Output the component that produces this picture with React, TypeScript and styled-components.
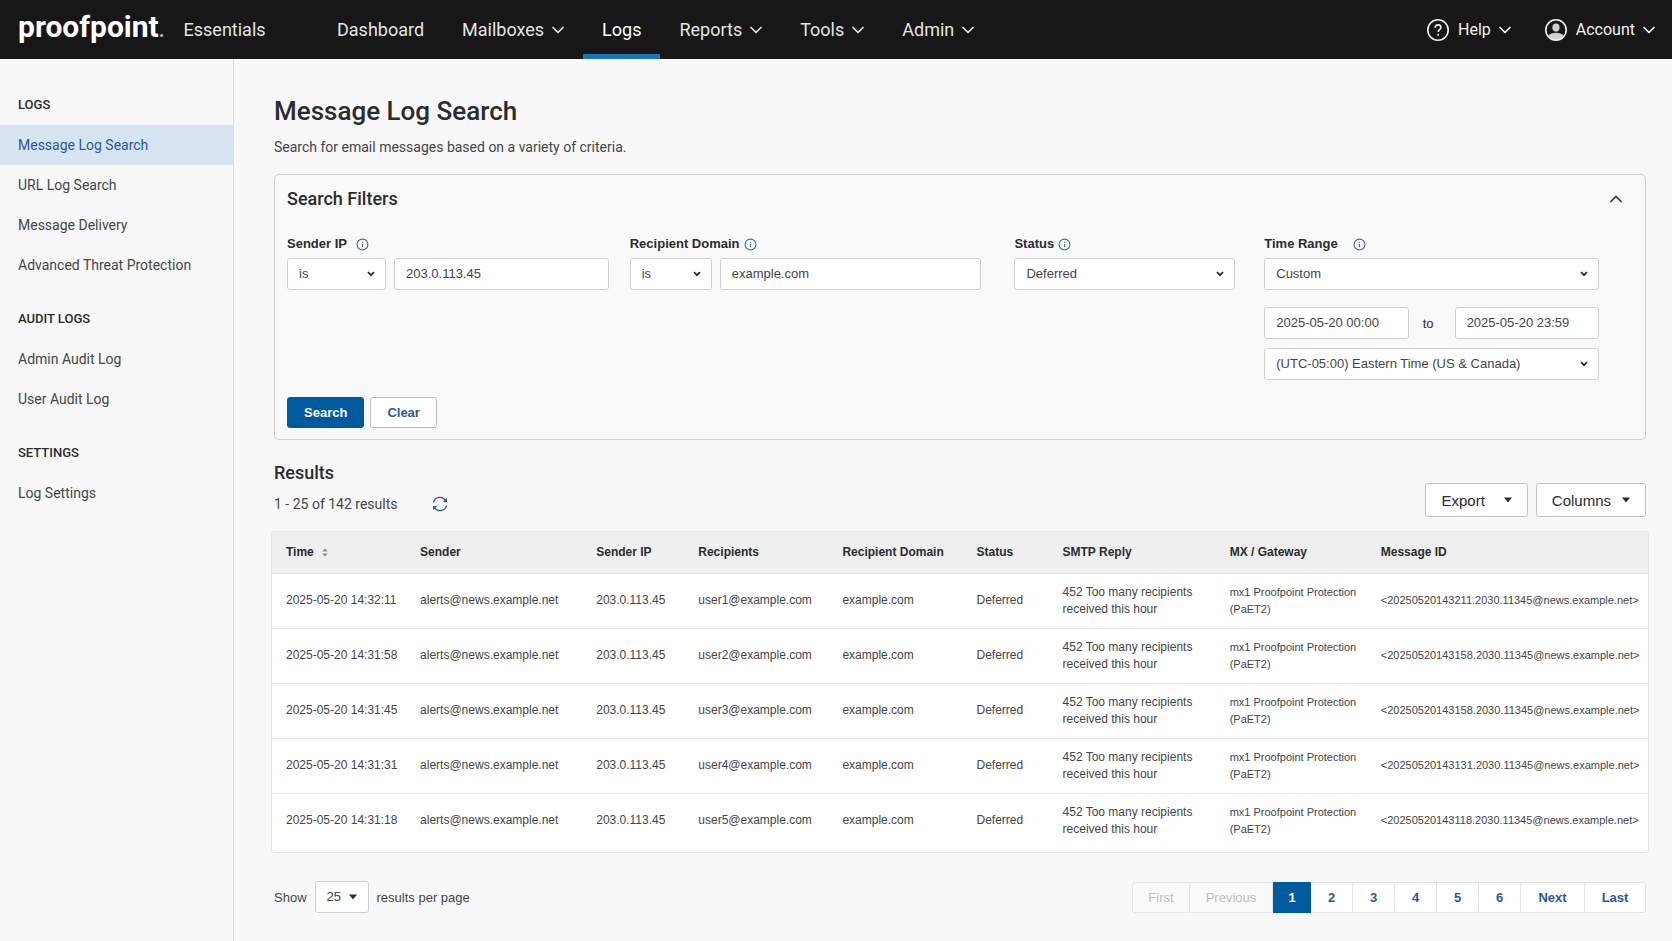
import React from "react";
import styled, { createGlobalStyle } from "styled-components";
import { Info } from "lucide-react";

const display = `Roboto, "Liberation Sans", sans-serif`;
const body = `"Liberation Sans", Arial, sans-serif`;

const color = {
  ink: "#2a2c2e",
  text: "#434648",
  link: "#28599a",
  brand: "#005a9e",
  line: "#cfd0d1",
  softLine: "#e4e5e6",
};

const GlobalStyle = createGlobalStyle`
  *, *::before, *::after { box-sizing: border-box; }
  body { margin: 0; background: #f8f8f8; color: ${color.text}; font-family: ${body}; }
  button, input, select { font-family: inherit; margin: 0; }
  h1, h2, h3, p, ul { margin: 0; padding: 0; }
  ul { list-style: none; }
  a { text-decoration: none; color: inherit; }
`;

const Page = styled.div`
  min-height: 100vh;
  display: flex;
  flex-direction: column;
`;

const TopBar = styled.header`
  height: 59px;
  flex: none;
  display: flex;
  align-items: stretch;
  padding: 0 17px 0 18px;
  background: #171717;
  color: #e4e4e4;
  font-family: ${display};
`;

const Brand = styled.a`
  display: flex;
  align-items: center;
  width: 300px;
  gap: 19px;
  font-size: 18px;
`;

const Wordmark = styled.span`
  color: #fff;
  font-size: 30px;
  font-weight: 700;
  line-height: 54px;
  padding-bottom: 2px;
`;

const Registered = styled.span`
  color: #b5b5b5;
  font-size: 20px;
`;

const MainNav = styled.nav`
  display: flex;
  flex: 1;
`;

const NavLink = styled.a<{ $active?: boolean }>`
  display: flex;
  align-items: center;
  gap: 8px;
  padding: 5px 19px 0;
  font-size: 18px;
  color: ${(p) => (p.$active ? "#fff" : "#e4e4e4")};
  border-bottom: 5px solid ${(p) => (p.$active ? "#1677bd" : "transparent")};
`;

const UserNav = styled.nav`
  display: flex;
  align-items: center;
  gap: 33px;
`;

const UserLink = styled.a`
  display: flex;
  align-items: center;
  gap: 8px;
  font-size: 16px;
  color: #f2f2f2;
`;

const Columns = styled.div`
  flex: 1;
  display: flex;
`;

const Sidebar = styled.aside`
  width: 234px;
  flex: none;
  padding-top: 26px;
  border-right: 1px solid #dcdddd;
  display: flex;
  flex-direction: column;
  gap: 14px;
  font-family: ${display};
`;

const SideHeading = styled.h3`
  padding-left: 18px;
  font-size: 13px;
  font-weight: 500;
  line-height: 40px;
  color: ${color.ink};
`;

const SideLink = styled.a<{ $active?: boolean }>`
  display: block;
  padding-left: 18px;
  font-size: 14px;
  line-height: 40px;
  color: ${(p) => (p.$active ? color.link : color.text)};
  background: ${(p) => (p.$active ? "#d7e5f3" : "transparent")};
`;

const Main = styled.main`
  flex: 1;
  min-width: 0;
  padding: 35px 26px 0 40px;
`;

const Title = styled.h1`
  font: 500 26px/34px ${display};
  color: ${color.ink};
`;

const Subtitle = styled.p`
  padding-top: 7px;
  font: 400 14px/24px ${display};
`;

const FilterCard = styled.section`
  margin-top: 15px;
  padding: 12px 46px 11px 12px;
  border: 1px solid ${color.line};
  border-radius: 5px;
  background: #f9f9f9;
`;

const CardHead = styled.div`
  display: flex;
  align-items: center;
  justify-content: space-between;
  margin-right: -27px;
`;

const Heading = styled.h2`
  font: 500 18px/24px ${display};
  color: ${color.ink};
`;

const IconButton = styled.button`
  display: flex;
  padding: 0 4px;
  border: 0;
  background: none;
  color: ${(p) => p.color ?? color.text};
`;

const Filters = styled.div`
  display: grid;
  grid-template-columns: 343fr 385fr 250fr 335fr;
  padding-top: 23px;
`;

const Field = styled.div<{ $after?: number }>`
  padding-right: ${(p) => p.$after ?? 0}px;
  min-width: 0;
`;

const FieldLabel = styled.label<{ $gap?: number }>`
  display: flex;
  align-items: center;
  gap: ${(p) => p.$gap ?? 4}px;
  padding-bottom: 4px;
  font-size: 13px;
  font-weight: 700;
  line-height: 20px;
  color: ${color.ink};

  svg { color: #3a69a6; }
`;

const Controls = styled.div<{ $top?: number }>`
  display: flex;
  align-items: center;
  gap: 8px;
  padding-top: ${(p) => p.$top ?? 0}px;
`;

const TextInput = styled.input`
  flex: 1;
  min-width: 0;
  height: 32px;
  padding: 0 11px 2px;
  border: 1px solid ${color.line};
  border-radius: 3px;
  background: #fff;
  color: ${color.text};
  font-size: 13px;
`;

const To = styled.span`
  width: 30px;
  padding-left: 6px;
  font-size: 13px;
  color: ${color.ink};
`;

const SelectBox = styled.span<{ $width?: number }>`
  display: grid;
  align-items: center;
  ${(p) => (p.$width ? `width: ${p.$width}px; flex: none;` : "flex: 1; min-width: 0;")}

  > * { grid-area: 1 / 1; }
  > svg { justify-self: end; margin-right: 11px; pointer-events: none; color: ${color.ink}; }
`;

const Select = styled.select`
  appearance: none;
  width: 100%;
  height: 32px;
  padding: 0 11px 2px;
  border: 1px solid ${color.line};
  border-radius: 3px;
  background: #fff;
  color: ${color.text};
  font-size: 13px;
`;

const Actions = styled.div`
  display: flex;
  gap: 6px;
  padding-top: 17px;
`;

const Button = styled.button<{ $primary?: boolean }>`
  height: 31px;
  padding: 0 16px;
  border: 1px solid ${(p) => (p.$primary ? color.brand : "#b9bbbd")};
  border-radius: 3px;
  background: ${(p) => (p.$primary ? color.brand : "#fff")};
  color: ${(p) => (p.$primary ? "#fff" : color.link)};
  font-size: 13px;
  font-weight: 700;
`;

const ResultsHead = styled.div`
  display: flex;
  justify-content: space-between;
  align-items: flex-end;
  padding: 21px 0 14px;
`;

const ResultCount = styled.div`
  display: flex;
  align-items: center;
  gap: 31px;
  padding-top: 6px;
  font: 400 14px/26px ${display};
`;

const Tools = styled.div`
  display: flex;
  gap: 8px;
`;

const ToolButton = styled.button<{ $gap: number }>`
  display: flex;
  align-items: center;
  gap: ${(p) => p.$gap}px;
  height: 34px;
  padding: 0 14px 0 15px;
  border: 1px solid #c0c2c4;
  border-radius: 3px;
  background: #fff;
  color: ${color.ink};
  font-size: 15px;
`;

const TableFrame = styled.div`
  margin: 0 -3px;
  padding-bottom: 4px;
  border: 1px solid ${color.softLine};
  border-radius: 3px;
  background: #fff;
`;

const Table = styled.table`
  width: 100%;
  table-layout: fixed;
  border-collapse: collapse;
`;

const HeadCell = styled.th<{ $width: number }>`
  width: ${(p) => p.$width}px;
  height: 41px;
  padding: 0;
  text-align: left;
  white-space: nowrap;
  font-size: 12px;
  font-weight: 700;
  color: ${color.ink};
  background: #efefef;
  border-bottom: 1px solid ${color.softLine};

  &:first-child { padding-left: 14px; }
  svg { margin-left: 8px; vertical-align: -1px; }
`;

const Row = styled.tr`
  &:not(:last-child) td { border-bottom: 1px solid ${color.softLine}; }
`;

const Cell = styled.td<{ $small?: boolean }>`
  height: 55px;
  padding: 0;
  font-size: ${(p) => (p.$small ? 11 : 12)}px;
  line-height: 17px;
  white-space: pre-line;

  &:first-child { padding-left: 14px; }
`;

const Footer = styled.footer`
  display: flex;
  justify-content: space-between;
  align-items: center;
  padding: 28px 0 27px;
`;

const PageSize = styled.label`
  display: flex;
  align-items: center;
  gap: 8px;
  font-size: 13px;
`;

const Pager = styled.nav`
  display: flex;
`;

const PageButton = styled.button<{ $width: number; $current?: boolean }>`
  width: ${(p) => p.$width}px;
  height: 31px;
  padding: 0;
  border: 1px solid ${(p) => (p.$current ? color.brand : color.softLine)};
  border-left-width: ${(p) => (p.$current ? 1 : 0)}px;
  background: ${(p) => (p.$current ? color.brand : "#fff")};
  color: ${(p) => (p.$current ? "#fff" : color.link)};
  font-size: 13px;
  font-weight: 700;

  &:first-child { border-left-width: 1px; border-radius: 3px 0 0 3px; }
  &:last-child { border-radius: 0 3px 3px 0; }
  &:disabled { background: #fafafa; color: #bcbec0; font-weight: 400; }
`;

const Chevron = ({ up }: { up?: boolean }) => (
  <svg width="12" height="8" viewBox="0 0 12 8" fill="none" aria-hidden="true">
    <path
      d={up ? "M0.8 6.600L6 1.400l5.200 5.200" : "M1 1.500l5 5 5-5"}
      stroke="currentColor"
      strokeWidth="1.7"
      strokeLinecap="round"
      strokeLinejoin="round"
    />
  </svg>
);

const Caret = () => (
  <svg width="10" height="6" viewBox="0 0 10 6" aria-hidden="true">
    <path d="M1 0.5h8L5 5.500z" fill="currentColor" />
  </svg>
);

const SelectArrow = () => (
  <svg width="8" height="6" viewBox="0 0 8 6" fill="none" aria-hidden="true">
    <path d="M1 1.200l3 3 3-3" stroke="currentColor" strokeWidth="1.8" />
  </svg>
);

const SortIcon = () => (
  <svg width="6" height="9" viewBox="0 0 6 9" aria-hidden="true">
    <path d="M0.200 3.500L3 0.400l2.800 3.100zM0.200 5.500L3 8.600l2.800-3.100z" fill="#8b8d8f" />
  </svg>
);

const RefreshIcon = () => (
  <svg width="16" height="16" viewBox="0 0 16 16" fill="none" aria-hidden="true">
    <g stroke="currentColor" strokeWidth="1.3">
      <path d="M1.500 6.400A6.600 6.600 0 0 1 13.500 4.400" />
      <path d="M14.500 9.600A6.600 6.600 0 0 1 2.500 11.600" />
    </g>
    <path d="M14.900 1.800v4.200h-4.200zM1.100 14.200V10h4.200z" fill="currentColor" />
  </svg>
);

const HelpIcon = () => (
  <svg width="24" height="24" viewBox="0 0 24 24" fill="none" stroke="currentColor" aria-hidden="true">
    <circle cx="12" cy="12" r="10.2" strokeWidth="1.6" />
    <path d="M9.200 9.700c0-1.700 1.200-2.800 2.900-2.800s2.800 1 2.800 2.600c0 2-2.800 2.200-2.800 4.500" strokeWidth="1.6" />
    <circle cx="12.1" cy="16.7" r="1" fill="currentColor" stroke="none" />
  </svg>
);

const AccountIcon = () => (
  <svg width="24" height="24" viewBox="0 0 24 24" fill="none" aria-hidden="true">
    <ellipse cx="12" cy="9.6" rx="3.6" ry="4.1" fill="#cfd0d4" />
    <path d="M4 18.200c1.800-2.400 4.800-3.400 8-3.400s6.200 1 8 3.400a10 10 0 0 1-16 0z" fill="#cfd0d4" />
    <circle cx="12" cy="12" r="10.2" stroke="currentColor" strokeWidth="1.6" />
  </svg>
);

const navItems = [
  { label: "Dashboard" },
  { label: "Mailboxes", menu: true },
  { label: "Logs", active: true },
  { label: "Reports", menu: true },
  { label: "Tools", menu: true },
  { label: "Admin", menu: true },
];

const sideGroups = [
  { title: "LOGS", links: ["Message Log Search", "URL Log Search", "Message Delivery", "Advanced Threat Protection"] },
  { title: "AUDIT LOGS", links: ["Admin Audit Log", "User Audit Log"] },
  { title: "SETTINGS", links: ["Log Settings"] },
];

const tableColumns: [string, number][] = [
  ["Time", 148],
  ["Sender", 176],
  ["Sender IP", 102],
  ["Recipients", 144],
  ["Recipient Domain", 134],
  ["Status", 86],
  ["SMTP Reply", 167],
  ["MX / Gateway", 151],
  ["Message ID", 267],
];

const messages = [
  ["14:32:11", "20250520143211"],
  ["14:31:58", "20250520143158"],
  ["14:31:45", "20250520143158"],
  ["14:31:31", "20250520143131"],
  ["14:31:18", "20250520143118"],
].map(([time, id], i) => [
  `2025-05-20 ${time}`,
  "alerts@news.example.net",
  "203.0.113.45",
  `user${i + 1}@example.com`,
  "example.com",
  "Deferred",
  "452 Too many recipients\nreceived this hour",
  "mx1 Proofpoint Protection\n(PaET2)",
  `<${id}.2030.11345@news.example.net>`,
]);

const pages: { label: string; width: number; disabled?: boolean; current?: boolean }[] = [
  { label: "First", width: 58, disabled: true },
  { label: "Previous", width: 83, disabled: true },
  { label: "1", width: 38, current: true },
  { label: "2", width: 42 },
  { label: "3", width: 42 },
  { label: "4", width: 42 },
  { label: "5", width: 42 },
  { label: "6", width: 42 },
  { label: "Next", width: 64 },
  { label: "Last", width: 61 },
];

interface DropdownProps {
  id?: string;
  label?: string;
  value: string;
  width?: number;
  arrow?: React.ReactNode;
}

const Dropdown = ({ id, label, value, width, arrow = <SelectArrow /> }: DropdownProps) => (
  <SelectBox $width={width}>
    <Select id={id} aria-label={label}>
      <option>{value}</option>
    </Select>
    {arrow}
  </SelectBox>
);

export default function App() {
  return (
    <Page>
      <GlobalStyle />
      <TopBar>
        <Brand href="#">
          <Wordmark>
            proofpoint<Registered>.</Registered>
          </Wordmark>
          Essentials
        </Brand>
        <MainNav>
          {navItems.map((item) => (
            <NavLink key={item.label} href="#" $active={item.active}>
              {item.label}
              {item.menu && <Chevron />}
            </NavLink>
          ))}
        </MainNav>
        <UserNav>
          <UserLink href="#">
            <HelpIcon />
            Help
            <Chevron />
          </UserLink>
          <UserLink href="#">
            <AccountIcon />
            Account
            <Chevron />
          </UserLink>
        </UserNav>
      </TopBar>
      <Columns>
        <Sidebar>
          {sideGroups.map((group) => (
            <div key={group.title}>
              <SideHeading>{group.title}</SideHeading>
              <ul>
                {group.links.map((link) => (
                  <li key={link}>
                    <SideLink href="#" $active={link === "Message Log Search"}>
                      {link}
                    </SideLink>
                  </li>
                ))}
              </ul>
            </div>
          ))}
        </Sidebar>
        <Main>
          <Title>Message Log Search</Title>
          <Subtitle>Search for email messages based on a variety of criteria.</Subtitle>
          <FilterCard>
            <CardHead>
              <Heading>Search Filters</Heading>
              <IconButton aria-label="Collapse filters">
                <Chevron up />
              </IconButton>
            </CardHead>
            <Filters>
              <Field $after={21}>
                <FieldLabel htmlFor="sender-ip" $gap={9}>
                  Sender IP <Info size={13} />
                </FieldLabel>
                <Controls>
                  <Dropdown label="Sender IP operator" value="is" width={99} />
                  <TextInput id="sender-ip" defaultValue="203.0.113.45" />
                </Controls>
              </Field>
              <Field $after={33}>
                <FieldLabel htmlFor="recipient-domain">
                  Recipient Domain <Info size={13} />
                </FieldLabel>
                <Controls>
                  <Dropdown label="Recipient domain operator" value="is" width={82} />
                  <TextInput id="recipient-domain" defaultValue="example.com" />
                </Controls>
              </Field>
              <Field $after={29}>
                <FieldLabel htmlFor="status">
                  Status <Info size={13} />
                </FieldLabel>
                <Controls>
                  <Dropdown id="status" value="Deferred" />
                </Controls>
              </Field>
              <Field>
                <FieldLabel htmlFor="time-range" $gap={15}>
                  Time Range <Info size={13} />
                </FieldLabel>
                <Controls>
                  <Dropdown id="time-range" value="Custom" />
                </Controls>
                <Controls $top={17}>
                  <TextInput aria-label="From" defaultValue="2025-05-20 00:00" />
                  <To>to</To>
                  <TextInput aria-label="Until" defaultValue="2025-05-20 23:59" />
                </Controls>
                <Controls $top={9}>
                  <Dropdown label="Time zone" value="(UTC-05:00) Eastern Time (US & Canada)" />
                </Controls>
              </Field>
            </Filters>
            <Actions>
              <Button $primary>Search</Button>
              <Button>Clear</Button>
            </Actions>
          </FilterCard>
          <ResultsHead>
            <div>
              <Heading>Results</Heading>
              <ResultCount>
                1 - 25 of 142 results
                <IconButton aria-label="Refresh" color={color.link}>
                  <RefreshIcon />
                </IconButton>
              </ResultCount>
            </div>
            <Tools>
              <ToolButton $gap={18}>
                Export <Caret />
              </ToolButton>
              <ToolButton $gap={10}>
                Columns <Caret />
              </ToolButton>
            </Tools>
          </ResultsHead>
          <TableFrame>
            <Table>
              <thead>
                <tr>
                  {tableColumns.map(([name, width]) => (
                    <HeadCell key={name} $width={width} scope="col">
                      {name}
                      {name === "Time" && <SortIcon />}
                    </HeadCell>
                  ))}
                </tr>
              </thead>
              <tbody>
                {messages.map((cells) => (
                  <Row key={cells[0]}>
                    {cells.map((value, i) => (
                      <Cell key={i} $small={i > 6}>
                        {value}
                      </Cell>
                    ))}
                  </Row>
                ))}
              </tbody>
            </Table>
          </TableFrame>
          <Footer>
            <PageSize>
              Show
              <Dropdown value="25" width={54} arrow={<Caret />} />
              results per page
            </PageSize>
            <Pager aria-label="Pagination">
              {pages.map((page) => (
                <PageButton
                  key={page.label}
                  $width={page.width}
                  $current={page.current}
                  disabled={page.disabled}
                  aria-current={page.current ? "page" : undefined}
                >
                  {page.label}
                </PageButton>
              ))}
            </Pager>
          </Footer>
        </Main>
      </Columns>
    </Page>
  );
}
